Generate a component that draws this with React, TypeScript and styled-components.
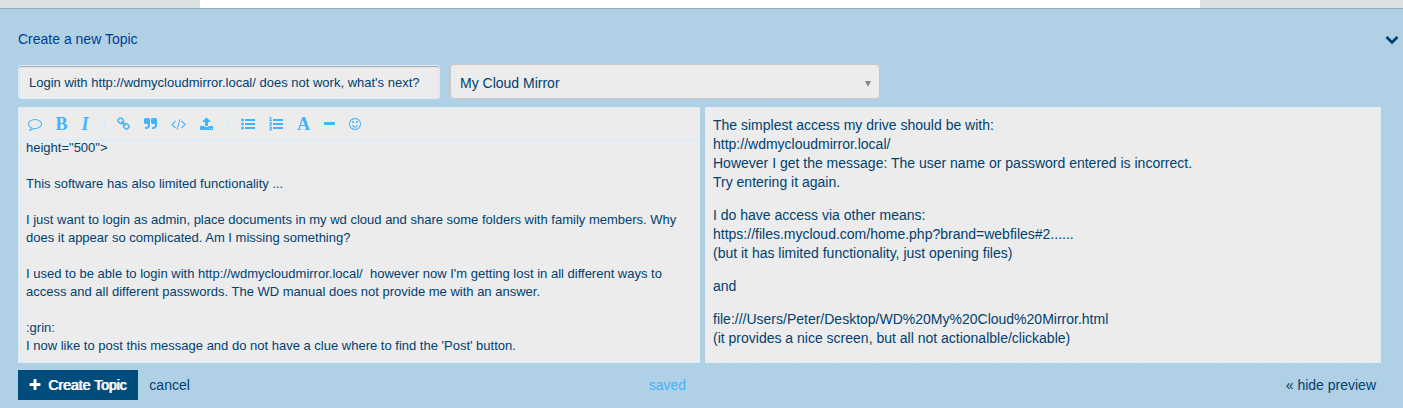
import React from "react";
import styled, { createGlobalStyle } from "styled-components";

const color = {
  panel: "#b0d0e5",
  field: "#ececec",
  line: "#d8edfc",
  text: "#00416f",
  title: "#003c96",
  accent: "#42b3ff",
  primary: "#004d7b",
};

const GlobalStyle = createGlobalStyle`
  *, *::before, *::after { box-sizing: border-box; }
  body {
    margin: 0;
    background: ${color.panel};
    color: ${color.text};
    font-family: "Liberation Sans", Arial, sans-serif;
    font-size: 14px;
    line-height: 19px;
  }
  button, input, select, textarea { font: inherit; color: inherit; margin: 0; }
`;

const PageBehind = styled.div`
  display: flex;
  justify-content: center;
  height: 8px;
  padding-right: 3px;
  background: #dbe0e3;
`;

const PageColumn = styled.div`
  width: 1000px;
  background: #fff;
`;

const Composer = styled.form`
  border-top: 1px solid #8fabbb;
  padding: 20px 22px 8px 18px;
  background: ${color.panel};
`;

const Header = styled.header`
  display: flex;
  justify-content: space-between;
  align-items: center;
  height: 20px;
  margin-right: -18px;
`;

const Title = styled.h1`
  margin: 0;
  font-size: 14px;
  line-height: 20px;
  font-weight: 400;
  color: ${color.title};
`;

const PlainButton = styled.button`
  display: flex;
  align-items: center;
  border: 0;
  padding: 0;
  background: none;
  cursor: pointer;
`;

const Fields = styled.div`
  display: flex;
  align-items: flex-end;
  gap: 10px;
  margin: 15px 0 8px;
`;

const TitleInput = styled.input`
  width: 422px;
  height: 34px;
  padding: 0 10px;
  border: 1px solid ${color.line};
  border-radius: 3px;
  background: ${color.field};
  box-shadow: inset 0 1px 1px rgba(0, 0, 0, 0.3);
  font-size: 13px;
  outline: 0;
`;

const SelectBox = styled.div`
  position: relative;
  width: 430px;
`;

const Category = styled.select`
  display: block;
  width: 100%;
  height: 35px;
  padding: 3px 30px 0 9px;
  border: 1px solid #c8c8c8;
  border-radius: 4px;
  background: ${color.field};
  appearance: none;
`;

const Caret = styled.svg`
  position: absolute;
  right: 9px;
  top: 17px;
  pointer-events: none;
`;

const Panes = styled.div`
  display: grid;
  grid-template-columns: 682fr 676fr;
  gap: 5px;
`;

const Editor = styled.section`
  display: flex;
  flex-direction: column;
  min-width: 0;
  border: 1px solid ${color.line};
  border-right: 0;
  background: ${color.field};
`;

const Toolbar = styled.div`
  display: flex;
  align-items: center;
  height: 33px;
  padding: 1px 2px 0;
  border-bottom: 2px solid ${color.line};
`;

const ToolButton = styled(PlainButton)`
  padding: 0 7px;
  height: 28px;
  color: ${color.accent};
`;

const Letter = styled.span<{ $width: number; $italic?: boolean }>`
  display: flex;
  justify-content: center;
  width: ${(p) => p.$width}px;
  font: ${(p) => (p.$italic ? "italic" : "normal")} bold 18px/18px "Liberation Serif", "Times New Roman", serif;
`;

const Divider = styled.span`
  width: 1px;
  height: 20px;
  margin: 0 5px 0 8px;
  background: ${color.line};
`;

const Message = styled.textarea`
  display: block;
  flex: 1;
  width: 100%;
  min-height: 223px;
  margin-top: -2px;
  padding: 0 7px;
  border: 0;
  background: transparent;
  font-size: 13px;
  line-height: 18px;
  resize: none;
  overflow: hidden;
  outline: 0;
`;

const Preview = styled.section`
  min-width: 0;
  padding: 8px 7px 0;
  border: 1px dashed ${color.line};
  background: ${color.field};
`;

const Paragraph = styled.p`
  margin: 0 0 14px;
  white-space: pre-line;

  &:last-child {
    margin-bottom: 0;
  }
`;

const Footer = styled.footer`
  display: grid;
  grid-template-columns: 682fr 676fr;
  gap: 5px;
  align-items: center;
  margin-top: 7px;
`;

const Actions = styled.div`
  display: flex;
  align-items: center;
  gap: 11px;
  padding-right: 14px;
`;

const Submit = styled(PlainButton)`
  gap: 7px;
  height: 30px;
  padding: 0 12px 0 11px;
  background: ${color.primary};
  color: #fff;
`;

const SubmitLabel = styled.span`
  text-shadow: 1px 0 0 currentColor;
`;

const TextLink = styled.a`
  color: ${color.text};
  text-decoration: none;
`;

const Saved = styled.span`
  margin-left: auto;
  color: ${color.accent};
`;

const HidePreview = styled(TextLink)`
  justify-self: end;
  padding-right: 5px;
`;

const QUOTE =
  "v704q0 104-40.5 198.5t-109.5 163.5-163.5 109.5-198.5 40.5h-64q-26 0-45-19t-19-45v-128q0-26 19-45t45-19h64q106 0 181-75t75-181v-32q0-40-28-68t-68-28h-224q-80 0-136-56t-56-136v-384q0-80 56-136t136-56h384q80 0 136 56t56 136z";

const BARS =
  "M512 256h1280v256h-1280zM512 768h1280v256h-1280zM512 1280h1280v256h-1280z";

const paths = {
  comment:
    "M896 384q-204 0-381.5 69.5t-282 187.5-104.5 255q0 112 71.5 213.5t201.5 175.5l87 50-27 96q-24 91-70 172 152-63 275-171l43-38 57 6q69 8 130 8 204 0 381.5-69.5t282-187.5 104.5-255-104.5-255-282-187.5-381.5-69.5zm896 512q0 174-120 321.5t-326 233-450 85.5q-70 0-145-8-198 175-460 242-49 14-114 22h-5q-15 0-27-10.5t-16-27.5v-1q-3-4-.5-12t2-10 4.5-9.5l6-9 7-8.5 8-9q7-8 31-34.5t34.5-38 31-39.5 32.5-51 27-59 26-76q-157-89-247.5-220t-90.5-281q0-130 71-248.5t191-204.5 286-136.5 348-50.5 348 50.5 286 136.5 191 204.5 71 248.5z",
  link: "M1520 1216q0-40-28-68l-208-208q-28-28-68-28-42 0-72 32 3 3 19 18.5t21.5 21.5 15 19 13 25.5 3.5 27.5q0 40-28 68t-68 28q-15 0-27.5-3.5t-25.5-13-19-15-21.5-21.5-18.5-19q-33 31-33 73 0 40 28 68l206 207q27 27 68 27 40 0 68-26l147-146q28-28 28-67zm-703-705q0-40-28-68l-206-207q-28-28-68-28-39 0-68 27l-147 146q-28 28-28 67 0 40 28 68l208 208q27 27 68 27 42 0 72-31-3-3-19-18.5t-21.5-21.5-15-19-13-25.5-3.5-27.5q0-40 28-68t68-28q15 0 27.5 3.5t25.5 13 19 15 21.5 21.5 18.5 19q33-31 33-73zm895 705q0 120-85 203l-147 146q-83 83-203 83-121 0-204-85l-206-207q-83-83-83-203 0-123 88-209l-88-88q-86 88-208 88-120 0-204-84l-208-208q-84-84-84-204t85-203l147-146q83-83 203-83 121 0 204 85l206 207q83 83 83 203 0 123-88 209l88 88q86-88 208-88 120 0 204 84l208 208q84 84 84 204z",
  quote: `M832 320${QUOTE}M1728 320${QUOTE}`,
  code: "M553 1399l-50 50q-10 10-23 10t-23-10l-466-466q-10-10-10-23t10-23l466-466q10-10 23-10t23 10l50 50q10 10 10 23t-10 23l-393 393 393 393q10 10 10 23t-10 23zm591-1067l-373 1291q-4 13-15.5 19.5t-23.5 2.5l-62-17q-13-4-19.5-15.5t-2.5-24.5l373-1291q4-13 15.5-19.5t23.5-2.5l62 17q13 4 19.5 15.5t2.5 24.5zm657 651l-466 466q-10 10-23 10t-23-10l-50-50q-10-10-10-23t10-23l393-393-393-393q-10-10-10-23t10-23l50-50q10-10 23-10t23 10l466 466q10 10 10 23t-10 23z",
  upload:
    "M1344 1472q0-26-19-45t-45-19-45 19-19 45 19 45 45 19 45-19 19-45zm256 0q0-26-19-45t-45-19-45 19-19 45 19 45 45 19 45-19 19-45zm128-224v320q0 40-28 68t-68 28h-1472q-40 0-68-28t-28-68v-320q0-40 28-68t68-28h427q21 56 70.5 92t110.5 36h256q61 0 110.5-36t70.5-92h427q40 0 68 28t28 68zm-325-648q-17 40-59 40h-256v448q0 26-19 45t-45 19h-256q-26 0-45-19t-19-45v-448h-256q-42 0-59-40-17-39 14-69l448-448q18-19 45-19t45 19l448 448q31 30 14 69z",
  bullets: `${BARS}M0 384a192 192 0 1 0 384 0a192 192 0 1 0-384 0zM0 896a192 192 0 1 0 384 0a192 192 0 1 0-384 0zM0 1408a192 192 0 1 0 384 0a192 192 0 1 0-384 0z`,
  numbers: `${BARS}M30 110L150 0H290V400H390V520H30V400H140V170L60 230zM20 690Q200 550 370 680Q430 800 230 970H390V1100H10V980Q230 800 220 740Q180 690 80 780zM30 1220H380V1340L280 1420Q400 1480 370 1640Q260 1830 10 1710L60 1600Q210 1660 230 1580Q220 1510 100 1520V1430L190 1340H30z`,
  minus:
    "M1600 736v192q0 40-28 68t-68 28h-1216q-40 0-68-28t-28-68v-192q0-40 28-68t68-28h1216q40 0 68 28t28 68z",
  smile:
    "M1262 1075q-37 121-138 195t-228 74-228-74-138-195q-8-25 4-48.5t38-31.5q25-8 48.5 4t31.5 38q25 80 92.5 129.5t151.5 49.5 151.5-49.5 92.5-129.5q8-26 32-38t49-4 37 31.5 4 48.5zm-494-435q0 53-37.5 90.5t-90.5 37.5-90.5-37.5-37.5-90.5 37.5-90.5 90.5-37.5 90.5 37.5 37.5 90.5zm512 0q0 53-37.5 90.5t-90.5 37.5-90.5-37.5-37.5-90.5 37.5-90.5 90.5-37.5 90.5 37.5 37.5 90.5zm256 256q0-130-51-248.5t-136.5-204-204-136.5-248.5-51-248.5 51-204 136.5-136.5 204-51 248.5 51 248.5 136.5 204 204 136.5 248.5 51 248.5-51 204-136.5 136.5-204 51-248.5zm128 0q0 209-103 385.5t-279.5 279.5-385.5 103-385.5-103-279.5-279.5-103-385.5 103-385.5 279.5-279.5 385.5-103 385.5 103 279.5 279.5 103 385.5z",
  plus: "M1600 736v192q0 40-28 68t-68 28h-416v416q0 40-28 68t-68 28h-192q-40 0-68-28t-28-68v-416h-416q-40 0-68-28t-28-68v-192q0-40 28-68t68-28h416v-416q0-40 28-68t68-28h192q40 0 68 28t28 68v416h416q40 0 68 28t28 68z",
  chevron:
    "M1683 808l-742 741q-19 19-45 19t-45-19l-742-741q-19-19-19-45.5t19-45.5l166-165q19-19 45-19t45 19l531 531 531-531q19-19 45-19t45 19l166 165q19 19 19 45.5t-19 45.5z",
};

type IconName = keyof typeof paths;

// 128 drawing units make one pixel; the view box is centred on the glyph.
function Icon({ name, width }: { name: IconName; width: number }) {
  return (
    <svg
      width={width}
      height={14}
      viewBox={`${896 - width * 64} 0 ${width * 128} 1792`}
      fill="currentColor"
      aria-hidden="true"
    >
      <path d={paths[name]} />
    </svg>
  );
}

function Tool({ label, children }: { label: string; children: React.ReactNode }) {
  return (
    <ToolButton type="button" aria-label={label} title={label}>
      {children}
    </ToolButton>
  );
}

const message = `height="500">

This software has also limited functionality ...

I just want to login as admin, place documents in my wd cloud and share some folders with family members. Why does it appear so complicated. Am I missing something?

I used to be able to login with http://wdmycloudmirror.local/  however now I'm getting lost in all different ways to access and all different passwords. The WD manual does not provide me with an answer.

:grin:
I now like to post this message and do not have a clue where to find the 'Post' button.`;

const preview = [
  `The simplest access my drive should be with:
http://wdmycloudmirror.local/
However I get the message: The user name or password entered is incorrect.
Try entering it again.`,
  `I do have access via other means:
https://files.mycloud.com/home.php?brand=webfiles#2......
(but it has limited functionality, just opening files)`,
  "and",
  `file:///Users/Peter/Desktop/WD%20My%20Cloud%20Mirror.html
(it provides a nice screen, but all not actionalble/clickable)`,
];

export default function App() {
  return (
    <>
      <GlobalStyle />
      <PageBehind>
        <PageColumn />
      </PageBehind>
      <Composer onSubmit={(e) => e.preventDefault()}>
        <Header>
          <Title>Create a new Topic</Title>
          <PlainButton type="button" aria-label="Collapse composer">
            <Icon name="chevron" width={14} />
          </PlainButton>
        </Header>
        <Fields>
          <TitleInput
            aria-label="Topic title"
            defaultValue="Login with http://wdmycloudmirror.local/ does not work, what's next?"
          />
          <SelectBox>
            <Category aria-label="Category" defaultValue="mirror">
              <option value="mirror">My Cloud Mirror</option>
            </Category>
            <Caret width="6" height="6" viewBox="0 0 6 6" aria-hidden="true">
              <path d="M0 0H6L3 6z" fill="#888" />
            </Caret>
          </SelectBox>
        </Fields>
        <Panes>
          <Editor>
            <Toolbar role="toolbar" aria-label="Formatting">
              <Tool label="Quote post"><Icon name="comment" width={14} /></Tool>
              <Tool label="Bold"><Letter $width={11}>B</Letter></Tool>
              <Tool label="Italic"><Letter $width={8} $italic>I</Letter></Tool>
              <Divider />
              <Tool label="Link"><Icon name="link" width={13} /></Tool>
              <Tool label="Blockquote"><Icon name="quote" width={13} /></Tool>
              <Tool label="Code"><Icon name="code" width={15} /></Tool>
              <Tool label="Upload"><Icon name="upload" width={13} /></Tool>
              <Divider />
              <Tool label="Bulleted list"><Icon name="bullets" width={14} /></Tool>
              <Tool label="Numbered list"><Icon name="numbers" width={14} /></Tool>
              <Tool label="Heading"><Letter $width={13}>A</Letter></Tool>
              <Tool label="Horizontal rule"><Icon name="minus" width={11} /></Tool>
              <Tool label="Emoji"><Icon name="smile" width={12} /></Tool>
            </Toolbar>
            <Message aria-label="Message" defaultValue={message} spellCheck={false} />
          </Editor>
          <Preview aria-label="Preview">
            {preview.map((text) => (
              <Paragraph key={text}>{text}</Paragraph>
            ))}
          </Preview>
        </Panes>
        <Footer>
          <Actions>
            <Submit type="submit">
              <Icon name="plus" width={12} />
              <SubmitLabel>Create Topic</SubmitLabel>
            </Submit>
            <TextLink href="#cancel">cancel</TextLink>
            <Saved role="status">saved</Saved>
          </Actions>
          <HidePreview href="#preview">« hide preview</HidePreview>
        </Footer>
      </Composer>
    </>
  );
}
